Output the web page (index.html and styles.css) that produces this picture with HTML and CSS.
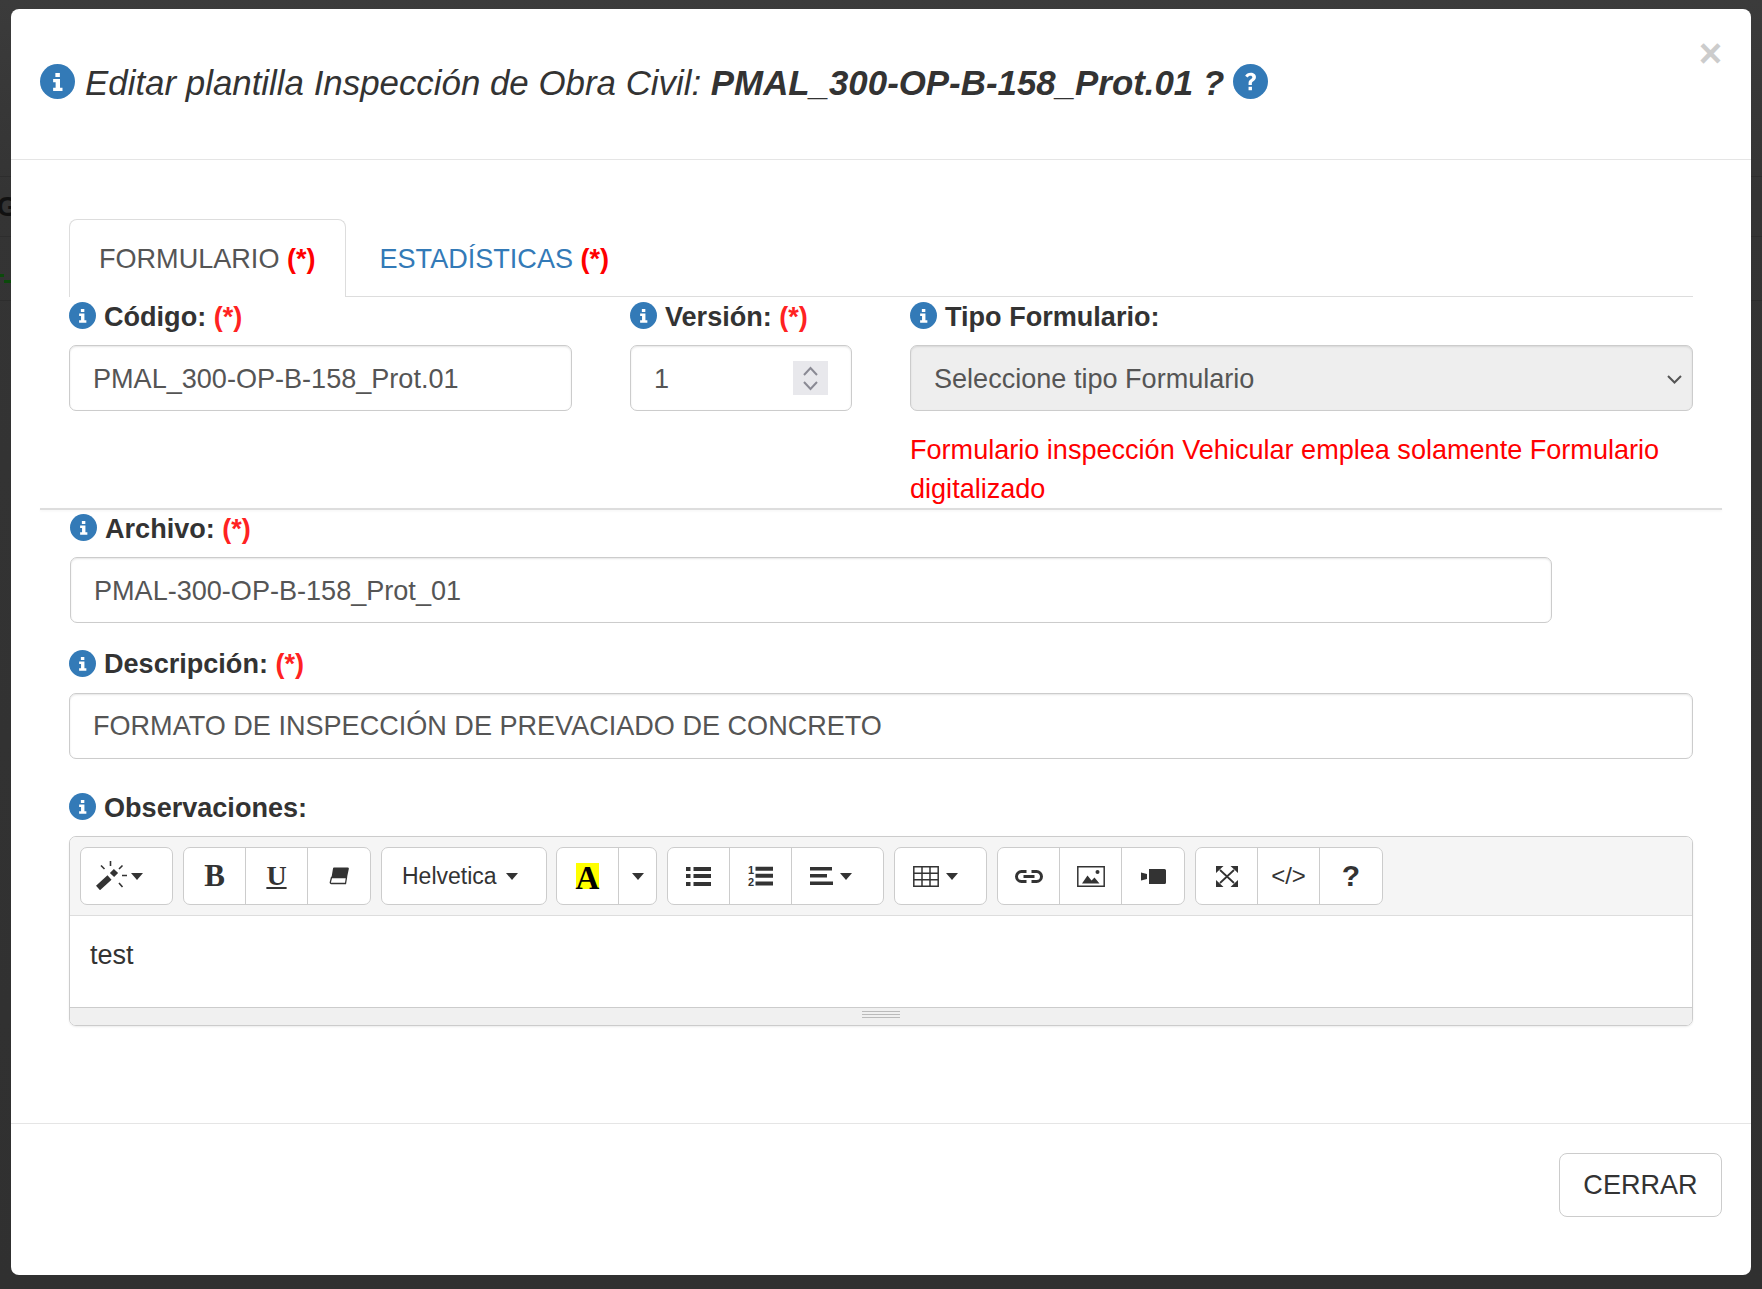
FILE: index.html
```html
<!DOCTYPE html>
<html lang="es">
<head>
<meta charset="utf-8">
<title>Editar plantilla</title>
<link rel="stylesheet" href="styles.css">
</head>
<body>
<svg width="0" height="0" class="defs">
  <symbol id="i-info" viewBox="0 0 28 28"><circle cx="14" cy="14" r="14" fill="#337ab7"/><path fill="#fff" d="M12.300 7.200h3.600v3.200h-3.600zM10.500 12h5.500v7h2v2.600h-7.500V19h2v-4.500h-2z"/></symbol>
  <symbol id="i-q" viewBox="0 0 36 36"><circle cx="18" cy="18" r="18" fill="#337ab7"/><path fill="#fff" d="M16 21.500v-1.800c0-2 1-2.900 2.300-3.900 1-.8 1.600-1.300 1.600-2.200 0-1-.8-1.600-1.900-1.600-1.300 0-2.200.7-3 1.800l-2.500-1.800c1.200-2 3.100-3 5.800-3 3 0 5.300 1.700 5.300 4.400 0 2.200-1.300 3.300-2.700 4.400-1 .8-1.500 1.300-1.500 2.200v1.500zM16 23.500h3.500V27H16z"/></symbol>
</svg>
<div class="backdrop">
  <i class="bd-line l1"></i><i class="bd-line l2"></i><i class="bd-line l3"></i>
  <span class="bd-g">G</span>
  <i class="bd-dash d1"></i><i class="bd-dash d2"></i>
</div>
<div class="modal">
  <header class="modal-head">
    <svg class="ico-title"><use href="#i-info"/></svg>
    <h4 class="title">Editar plantilla Inspección de Obra Civil: <b>PMAL_300-OP-B-158_Prot.01 ?</b></h4>
    <svg class="ico-q"><use href="#i-q"/></svg>
    <span class="close">×</span>
  </header>
  <main class="modal-body">
    <nav class="tabs">
      <span class="tab active">FORMULARIO <b class="req-tab">(*)</b></span>
      <span class="tab link">ESTADÍSTICAS <b class="req-tab">(*)</b></span>
    </nav>
    <div class="row-top">
      <div>
        <label class="lbl"><svg class="ico"><use href="#i-info"/></svg>Código: <span class="req">(*)</span></label>
        <div class="input">PMAL_300-OP-B-158_Prot.01</div>
      </div>
      <div>
        <label class="lbl"><svg class="ico"><use href="#i-info"/></svg>Versión: <span class="req">(*)</span></label>
        <div class="input">1
          <span class="spin"><svg width="35" height="34" viewBox="0 0 35 34"><path d="M11 14l6.500-7 6.500 7M11 21l6.500 7 6.500-7" fill="none" stroke="#8a8a94" stroke-width="2"/></svg></span>
        </div>
      </div>
      <div>
        <label class="lbl"><svg class="ico"><use href="#i-info"/></svg>Tipo Formulario:</label>
        <div class="input select">Seleccione tipo Formulario
          <svg class="caret" width="15" height="10" viewBox="0 0 15 10"><path d="M1 2l6.500 6.500L14 2" fill="none" stroke="#555" stroke-width="2"/></svg>
        </div>
        <p class="warn">Formulario inspección Vehicular emplea solamente Formulario digitalizado</p>
      </div>
    </div>
    <hr class="sep">
    <div class="f-archivo">
      <label class="lbl"><svg class="ico"><use href="#i-info"/></svg>Archivo: <span class="req">(*)</span></label>
      <div class="input">PMAL-300-OP-B-158_Prot_01</div>
    </div>
    <div class="f-desc">
      <label class="lbl"><svg class="ico"><use href="#i-info"/></svg>Descripción: <span class="req">(*)</span></label>
      <div class="input">FORMATO DE INSPECCIÓN DE PREVACIADO DE CONCRETO</div>
    </div>
    <div class="f-obs">
      <label class="lbl"><svg class="ico"><use href="#i-info"/></svg>Observaciones:</label>
      <div class="editor">
        <div class="toolbar">
          <div class="grp g92"><span class="btn start p15"><svg class="wand" width="31" height="29" viewBox="0 0 31 29"><path fill="none" stroke="#333" stroke-width="6" d="M2 27l11.500-10.500M16 14l4-4"/><path fill="none" stroke="#333" stroke-width="1.600" d="M14.500 0v5M5 4.500L8.500 8M26.500 4.500L23 8M26 14.500h5M23 22l3.500 4"/></svg><i class="cdn"></i></span></div>
          <div class="grp g188">
            <span class="btn w62 serif-b">B</span>
            <span class="btn w62 serif-u">U</span>
            <span class="btn"><svg width="20" height="18" viewBox="0 0 20 18"><path fill="#333" d="M5 .5h13.500a1.300 1.300 0 0 1 1.300 1.600L18 10.500H2.500L4 1.500a1.200 1.200 0 0 1 1-1z"/><path fill="#fff" stroke="#333" stroke-width="1.300" d="M2.500 10.500h15l-1 6H2.300a1 1 0 0 1-1-1.200z"/></svg></span>
          </div>
          <div class="grp g166"><span class="btn start p20 font-btn">Helvetica<i class="cdn"></i></span></div>
          <div class="grp g100">
            <span class="btn w62"><span class="color-a">A</span></span>
            <span class="btn"><i class="cdn nom"></i></span>
          </div>
          <div class="grp g217">
            <span class="btn w62"><svg width="25" height="19" viewBox="0 0 25 19"><path fill="#333" d="M0 0h4.500v4H0zM7.500 0H25v4H7.500zM0 7h4.500v4H0zM7.500 7H25v4H7.500zM0 15h4.500v4H0zM7.500 15H25v4H7.500z"/></svg></span>
            <span class="btn w62"><svg class="ol-svg" width="25" height="20" viewBox="0 0 25 20"><path fill="#333" d="M7.500 .7H25v4H7.500zM7.500 7.700H25v4H7.500zM7.500 15.500H25v4H7.500z"/><text x="0" y="8" class="ol">1</text><text x="0" y="20" class="ol">2</text></svg></span>
            <span class="btn start p18"><svg width="23" height="18" viewBox="0 0 23 18"><path fill="#333" d="M0 0h22v3.500H0zM0 7h17v3.500H0zM0 14.500h23V18H0z"/></svg><i class="cdn m8"></i></span>
          </div>
          <div class="grp g93"><span class="btn start p18"><svg width="26" height="21" viewBox="0 0 26 21"><path fill="none" stroke="#333" stroke-width="1.500" d="M.8.8h24.400v19.400H.8zM.8 7.300h24.400M.8 13.800h24.400M9 .8v19.400M17 .8v19.400"/></svg><i class="cdn m8"></i></span></div>
          <div class="grp g188">
            <span class="btn w62"><svg width="28" height="13" viewBox="0 0 28 13"><path fill="none" stroke="#333" stroke-width="3" d="M11.500 1.500H6.500a5 5 0 0 0 0 10h5M16.500 1.500h5a5 5 0 0 1 0 10h-5M8.500 6.500h11"/></svg></span>
            <span class="btn w62"><svg width="28" height="21" viewBox="0 0 28 21"><path fill="none" stroke="#333" stroke-width="1.500" d="M.8.8h26.400v19.400H.8z"/><path fill="#333" d="M5 17.500l5.500-8 4 5 3-3 5 6z"/><circle cx="20.500" cy="6" r="2" fill="#333"/></svg></span>
            <span class="btn"><svg width="25" height="15" viewBox="0 0 25 15"><path fill="#333" d="M8 0h15.500a1.500 1.500 0 0 1 1.500 1.500v12a1.500 1.500 0 0 1-1.500 1.500H8zM0 3.500l6 1.500v5l-6 1.500z"/></svg></span>
          </div>
          <div class="grp g188">
            <span class="btn w62"><svg width="22" height="21" viewBox="0 0 22 21"><path fill="none" stroke="#333" stroke-width="1.800" d="M4 4l14 13M18 4L4 17"/><path fill="#333" d="M0 0h7.500L0 7zM22 0h-7.500L22 7zM0 21h7.500L0 14zM22 21h-7.500L22 14z"/></svg></span>
            <span class="btn w62 code">&lt;/&gt;</span>
            <span class="btn help">?</span>
          </div>
        </div>
        <div class="note">test</div>
        <div class="resize"><i></i></div>
      </div>
    </div>
  </main>
  <footer class="modal-foot"><span class="btn-close">CERRAR</span></footer>
</div>
</body>
</html>
```
FILE: styles.css
```css
* { box-sizing: border-box; }
html, body { margin: 0; height: 100%; }
body { background: linear-gradient(#3b3b3b, #343434 15%, #303030); font-family: "Liberation Sans", Arial, sans-serif; font-size: 27.07px; color: #333; overflow: hidden; }
.defs { position: absolute; }
.backdrop { position: absolute; inset: 0; overflow: hidden; }
.bd-line { position: absolute; left: 0; right: 0; height: 1px; background: #2d2d2d; }
.l1 { top: 176px; } .l2 { top: 236px; } .l3 { top: 300px; }
.bd-g { position: absolute; left: -3px; top: 192px; font-size: 27px; line-height: 31px; font-weight: 700; color: #111; }
.bd-dash { position: absolute; height: 3px; background: #0b4a0b; }
.d1 { left: 0; width: 4px; top: 274px; }
.d2 { left: 4px; width: 8px; top: 280px; }
.modal { position: relative; margin: 9px 11px 14px 11px; height: 1266px; background: #fff; border-radius: 8px; display: flex; flex-direction: column; }
.modal-head { height: 151px; flex: none; border-bottom: 1px solid #e5e5e5; display: flex; align-items: center; padding: 0 0 5px 29px; position: relative; }
.ico-title, .ico-q { width: 35px; height: 35px; flex: none; }
.title { margin: 0 0 0 10px; padding-top: 2px; font-size: 34.87px; font-weight: 400; font-style: italic; white-space: pre-wrap; }
.title b { font-weight: 700; }
.ico-q { margin-left: 9px; }
.close { position: absolute; right: 29px; top: 24px; font-size: 40px; font-weight: 700; color: #ccc; line-height: 1; }
.modal-body { flex: 1; padding: 59px 58px 0; }
.tabs { display: flex; height: 78px; border-bottom: 1px solid #ddd; }
.tab { height: 78px; padding: 23px 30px 0; line-height: 32px; white-space: pre-wrap; border: 1px solid transparent; border-bottom: 0; }
.tab.active { background: #fff; border-color: #ddd; border-radius: 8px 8px 0 0; color: #555; padding-left: 29px; padding-right: 29px; }
.tab.link { color: #337ab7; padding-left: 33px; }
.req-tab { color: #f00; }
.req { color: #f22; }
.lbl { display: flex; align-items: center; font-weight: 700; height: 37px; padding-top: 2px; white-space: pre-wrap; }
.ico { width: 27px; height: 27px; margin: -2px 8px 0 0; flex: none; }
.row-top { display: grid; grid-template-columns: 503px 222px 1fr; column-gap: 58px; }
.input { height: 66px; border: 1px solid #ccc; border-radius: 7px; padding: 0 23px; line-height: 66px; color: #555; background: #fff; margin-top: 11px; box-shadow: inset 0 1px 2px rgba(0,0,0,.1); white-space: nowrap; position: relative; }
.spin { position: absolute; right: 23px; top: 15px; width: 35px; height: 34px; background: #e8e8ec; display: flex; }
.select { background: #eee; }
.caret { position: absolute; right: 10px; top: 28px; }
.warn { margin: 19px 0 0; color: #f00; line-height: 39px; }
.sep { margin: 0 -29px; border: 0; border-top: 2px solid #ddd; height: 0; box-shadow: 0 1px 3px rgba(0,0,0,.05); }
.f-archivo { margin: -1px 0 0 1px; width: 1482px; }
.f-desc { margin-top: 22px; }
.f-desc .lbl { padding-top: 0; }
.f-desc .ico { margin-top: 0; }
.f-desc .input { line-height: 64px; }
.f-obs { margin-top: 29px; }
.editor { margin-top: 11px; border: 1px solid #ccc; border-radius: 7px; overflow: hidden; box-shadow: 0 1px 2px rgba(0,0,0,.08); }
.toolbar { height: 79px; background: #f5f5f5; border-bottom: 1px solid #ddd; padding: 10px 0 0 10px; display: flex; gap: 10px; }
.grp { display: flex; height: 58px; border: 1px solid #ccc; border-radius: 7px; background: #fff; flex: none; }
.g92 { width: 93px; } .g93 { width: 93px; } .g188 { width: 188px; } .g166 { width: 166px; } .g100 { width: 101px; margin-left: -1px; } .g217 { width: 217px; }
.btn { display: flex; flex: 1; align-items: center; justify-content: center; height: 100%; border-left: 1px solid #ccc; color: #333; }
.btn:first-child { border-left: 0; }
.w62 { flex: none; width: 62px; }
.btn.w62:first-child { width: 61px; }
.start { justify-content: flex-start; }
.p15 { padding-left: 15px; } .p18 { padding-left: 18px; } .p20 { padding-left: 20px; }
.cdn { display: inline-block; border-top: 7px solid #333; border-left: 6px solid transparent; border-right: 6px solid transparent; margin-left: 4px; }
.nom { margin-left: 0; }
.m8 { margin-left: 7px; }
.font-btn { font-size: 23px; }
.font-btn .cdn { margin-left: 9px; }
.wand { margin-top: -1px; }
.serif-b { font: 700 31px "Liberation Serif", serif; }
.serif-u { font: 700 28px "Liberation Serif", serif; text-decoration: underline; }
.color-a { font: 700 33px/30px "Liberation Serif", serif; background: #ff0; color: #000; width: 23px; height: 26px; display: flex; justify-content: center; }
.ol-svg { overflow: visible; }
.ol { font-size: 11px; font-weight: 700; fill: #333; }
.code { font-size: 24px; }
.help { font-weight: 700; font-size: 30px; }
.note { height: 91px; padding: 20px 20px 0; line-height: 38px; background: #fff; }
.resize { height: 18px; background: #f0f0f0; border-top: 1px solid #ccc; display: flex; justify-content: center; padding-top: 3px; }
.resize i { display: block; width: 38px; height: 7px; border-top: 1px solid #bbb; border-bottom: 1px solid #bbb; background: linear-gradient(#bbb,#bbb) center/100% 1px no-repeat; }
.modal-foot { height: 152px; flex: none; border-top: 1px solid #e5e5e5; padding: 29px 29px 0 0; display: flex; justify-content: flex-end; }
.btn-close { width: 163px; height: 64px; border: 1px solid #ccc; border-radius: 8px; text-align: center; line-height: 62px; }
```
